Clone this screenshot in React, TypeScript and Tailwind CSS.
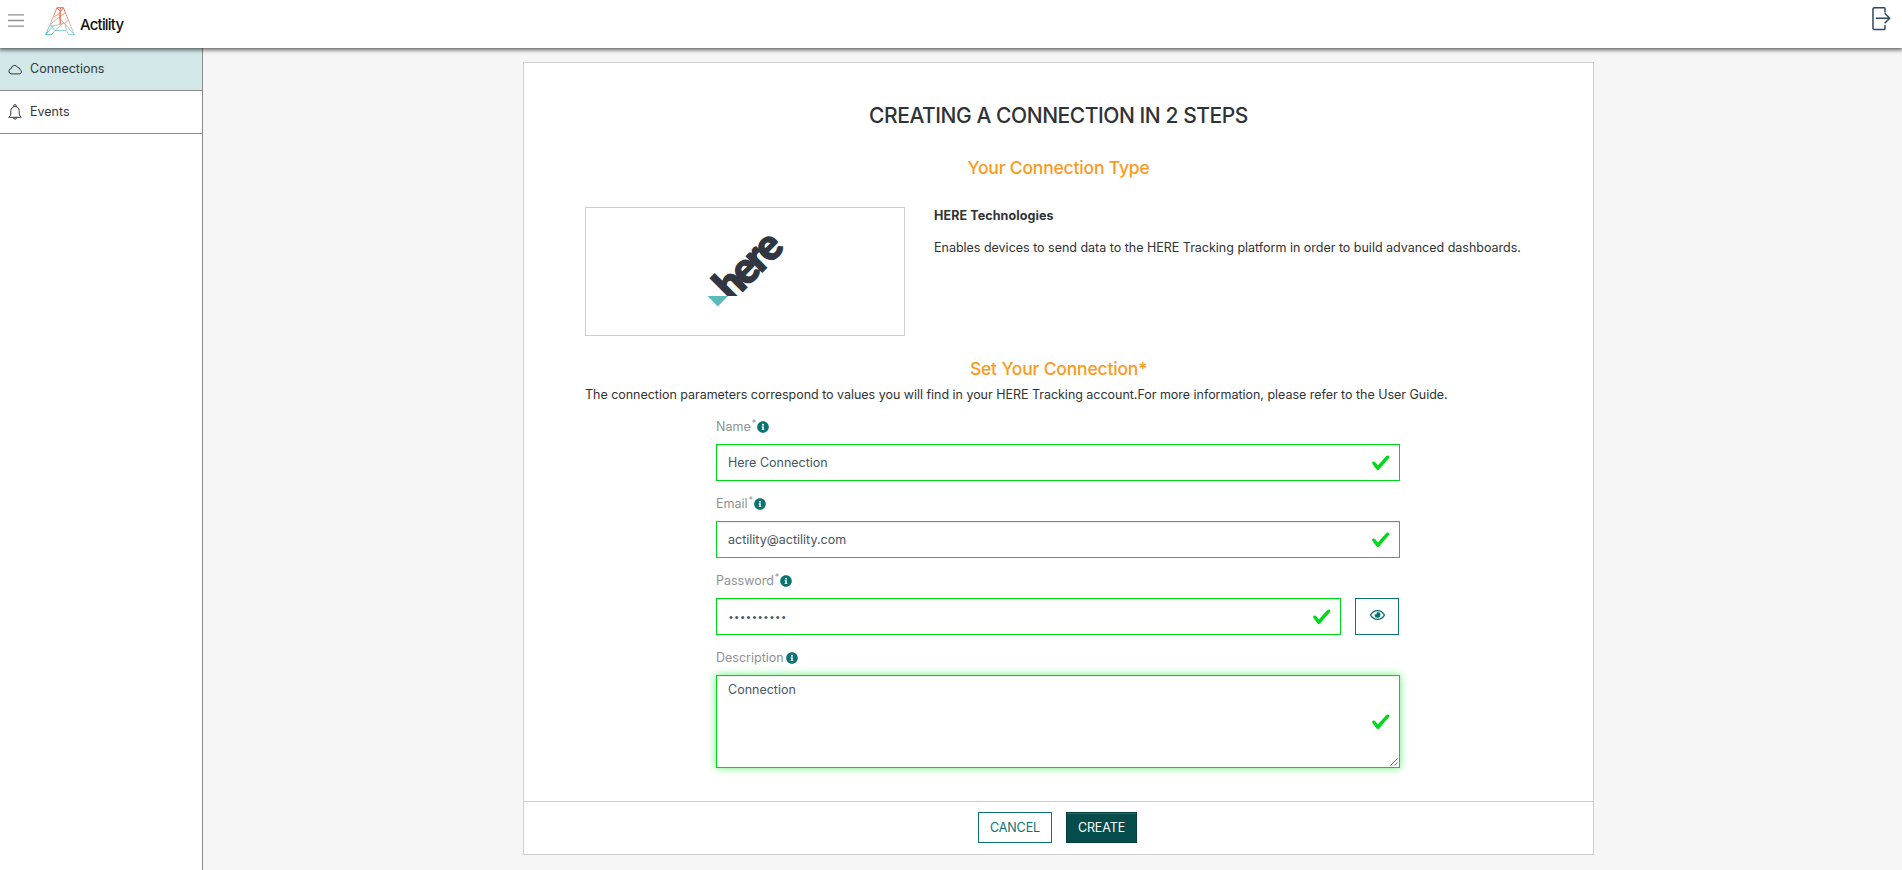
import { type ReactNode } from "react";
import { FaInfoCircle, FaRegEye } from "react-icons/fa";

function HeaderLogo() {
  return (
    <div className="flex items-start">
      <svg className="h-[29px] w-[30px]" viewBox="0 0 30 29" fill="none" strokeWidth="0.9" strokeLinejoin="round">
        <defs>
          <linearGradient id="tower" x1="18" y1="0" x2="10" y2="29" gradientUnits="userSpaceOnUse">
            <stop offset="0" stopColor="#e8543a" />
            <stop offset="0.45" stopColor="#efa58c" />
            <stop offset="0.75" stopColor="#8fcfcb" />
            <stop offset="1" stopColor="#35b3c0" />
          </linearGradient>
        </defs>
        <g stroke="url(#tower)">
          <path d="M12 .7h6.300L29.300 27.700h-5.600l-2.300-4.200H10L6.400 27.700H.7L12 .7Z" />
          <path d="M12 .7 15.500 5M18.300.7 14 7 16 18M8.500 10 14 7M19.800 6 5 17.500 8 19 .7 27.700M8 19l12-3 3.500-3M14.500 11l14.800 16.700M5 17.500 10 23.500 18 16M20 16l1.400 7.500" />
        </g>
        <path d="M15.200 1v16" stroke="#e8704f" strokeWidth="1.1" />
      </svg>
      <span className="ml-[5px] mt-[9px] text-[15px] font-medium leading-[18px] tracking-[-0.8px] text-[#111]">Actility</span>
    </div>
  );
}

function Header() {
  return (
    <header className="relative z-10 flex h-12 shrink-0 items-start bg-white shadow-[0_1px_4px_1px_rgba(0,0,0,0.6)]">
      <svg className="ml-2 mt-[14px] h-[14px] w-4" viewBox="0 0 16 14" stroke="#8f8f8f" strokeWidth="1.3">
        <path d="M0 .9h16M0 6.500h16M0 12.100h16" />
      </svg>
      <div className="ml-[21px] mt-[7px]">
        <HeaderLogo />
      </div>
      <svg className="ml-auto mr-[11px] mt-[7px] h-6 w-[19px]" viewBox="0 0 19 24" fill="none" stroke="#2f4a60" strokeWidth="1.5" strokeLinejoin="round">
        <path d="M13 5.500V1.500q0-.7-.7-.7H2.200Q1 .8 1 2v19.500q0 1 1.200 1h10.100q.7 0 .7-.7V18" />
        <path d="M3.700 11.300H17M12.700 6.300l5 5-5 5" />
      </svg>
    </header>
  );
}

function SideItem({ label, active, icon }: { label: string; active?: boolean; icon: ReactNode }) {
  return (
    <a className={`flex h-[43px] items-center border-b border-[#8a8a8a] pl-2 text-[12.5px] text-[#33373b] ${active ? "bg-[#d3e8e8]" : "bg-white"}`}>
      <span className="flex w-[22px]">{icon}</span>
      <span className="pt-px">{label}</span>
    </a>
  );
}

function Sidebar() {
  return (
    <nav className="w-[203px] shrink-0 border-r border-[#8a8a8a] bg-white">
      <SideItem
        label="Connections"
        active
        icon={
          <svg className="h-[11px] w-[14px]" viewBox="0 0 14 11" fill="none" stroke="#33373b" strokeWidth="1">
            <path d="M3 9.900h8.300a2.200 2.200 0 0 0 .8-4.200Q11.800 3.300 9.700 3.600A3.300 3.300 0 0 0 3.300 4.500 2.750 2.750 0 0 0 3 9.900Z" />
          </svg>
        }
      />
      <SideItem
        label="Events"
        icon={
          <svg className="h-4 w-[14px]" viewBox="0 0 14 16" fill="none" stroke="#33373b" strokeWidth="1" strokeLinejoin="round">
            <path d="M.7 13.300Q2.800 11.800 2.800 10V6.700a4.200 4.200 0 0 1 8.400 0V10q0 1.800 2.100 3.300ZM5.700 2.700V1.500q0-.8 1.300-.8t1.300.8v1.200M5.300 13.500q.3 1.700 1.700 1.700t1.700-1.700" />
          </svg>
        }
      />
    </nav>
  );
}

function HereLogo() {
  return (
    <svg className="h-[76px] w-[80px] overflow-visible" viewBox="705 234 80 76">
      <clipPath id="ground">
        <path d="M700 220h100v76H700Z" />
      </clipPath>
      <g clipPath="url(#ground)">
        <text
          transform="translate(731.5 302.5) rotate(-45) scale(0.97 1)"
          className="font-['Lato'] text-[43px] font-black tracking-[-2.5px]"
          fill="#323640"
          stroke="#323640"
          strokeWidth="1.6"
        >
          here
        </text>
      </g>
      <path d="M707.500 296H728L717.800 306.400Z" fill="#5cb9bc" />
    </svg>
  );
}

function Check() {
  return (
    <svg className="h-[19.5px] w-[19.5px]" viewBox="0 0 8 8" fill="#00d81a">
      <path d="M2.300 6.730L.6 4.530c-.4-1.040.46-1.400 1.100-.8l1.100 1.400 3.400-3.800c.6-.63 1.600-.27 1.200.7l-4 4.600c-.43.5-.8.4-1.100.1z" />
    </svg>
  );
}

function Label({ text, required }: { text: string; required?: boolean }) {
  return (
    <div className="flex h-[37px] items-center pt-2 text-[12.5px] text-[#8f9294]">
      <span className="pt-[2px]">{text}</span>
      {required && <span className="mb-[9px] ml-px text-[9px] leading-[9px]">*</span>}
      <FaInfoCircle className={`h-3 w-3 text-[#0a7271] ${required ? "ml-px" : "ml-[2px]"}`} />
    </div>
  );
}

function Field({ label, required, focused, children, after }: { label: string; required?: boolean; focused?: boolean; children: ReactNode; after?: ReactNode }) {
  return (
    <div>
      <Label text={label} required={required} />
      <div className={`mt-[3px] flex ${focused ? "h-[93px]" : "h-[37px]"}`}>
        <div
          className={`relative flex flex-1 items-center justify-between border border-[#00d81a] bg-white pl-[11px] pr-[9px] text-[12.5px] text-[#495660] ${
            focused ? "shadow-[inset_0_1px_1px_rgba(0,0,0,0.075),0_0_8px_#66f077]" : "shadow-[inset_0_1px_1px_rgba(0,0,0,0.075)]"
          }`}
        >
          {children}
          <Check />
          {focused && (
            <svg className="absolute bottom-[1px] right-[1px] h-2 w-2" viewBox="0 0 8 8" stroke="#444" strokeWidth=".8">
              <path d="M.5 7.500l7-7M4.500 7.500l3-3" />
            </svg>
          )}
        </div>
        {after}
      </div>
    </div>
  );
}

export default function App() {
  return (
    <div className="flex h-[870px] w-full flex-col overflow-hidden bg-[#f6f6f6] font-['Inter',sans-serif]">
      <Header />
      <div className="flex flex-1">
        <Sidebar />
        <main className="flex flex-1 flex-col items-center pl-[12px] pt-[14px]">
          <section className="flex h-[793px] w-[1071px] flex-col border border-[#cfcfcf] bg-white text-[#303336]">
            <div className="flex-1 px-[61px]">
              <h1 className="mt-[38px] text-center text-[21px] font-medium leading-[30px] tracking-[-0.44px]">CREATING A CONNECTION IN 2 STEPS</h1>
              <h2 className="mt-[24px] text-center text-[17.5px] font-medium leading-[26px] tracking-[-0.18px] text-[#fb9a1c]">Your Connection Type</h2>
              <div className="mt-[26px] flex">
                <div className="flex h-[129px] w-[320px] shrink-0 items-start justify-center border border-[#cfcfcf] pt-[26px]">
                  <HereLogo />
                </div>
                <div className="ml-[29px] whitespace-nowrap text-[12.5px] leading-[18px]">
                  <p className="font-bold tracking-[0.1px]">HERE Technologies</p>
                  <p className="mt-[14px] tracking-[-0.01px]">Enables devices to send data to the HERE Tracking platform in order to build advanced dashboards.</p>
                </div>
              </div>
              <h2 className="mt-[20px] text-center text-[17.5px] font-medium leading-[26px] tracking-[-0.18px] text-[#fb9a1c]">Set Your Connection*</h2>
              <p className="mt-[4px] text-[12.5px] leading-[18px] tracking-[-0.025px]">
                The connection parameters correspond to values you will find in your HERE Tracking account.For more information, please refer to the User Guide.
              </p>
              <div className="ml-[131px] w-[684px]">
                <Field label="Name" required>
                  <span className="pt-[2px]">Here Connection</span>
                </Field>
                <Field label="Email" required>
                  <span className="pt-[2px]">actility@actility.com</span>
                </Field>
                <Field
                  label="Password"
                  required
                  after={
                    <button className="ml-[14px] mr-px flex w-[44px] items-center justify-center border border-[#0a7271] pb-[3px] text-[#0a7271]">
                      <FaRegEye className="h-[14px] w-[15px]" />
                    </button>
                  }
                >
                  <span className="pl-px pt-px font-['Liberation_Sans',sans-serif] text-[11px] tracking-[2px]">••••••••••</span>
                </Field>
                <Field label="Description" focused>
                  <span className="self-start pt-[5px]">Connection</span>
                </Field>
              </div>
            </div>
            <footer className="flex h-[53px] items-start justify-center border-t border-[#cfcfcf] pr-[2px] pt-[10px] text-[12.5px] tracking-[-0.1px]">
              <button className="flex h-[31px] w-[74px] items-center justify-center border border-[#0a7271] pt-[2px] text-[#0a7271]">CANCEL</button>
              <button className="ml-[14px] flex h-[31px] w-[71px] items-center justify-center border border-[#043f3e] bg-[#054d4c] pt-[2px] text-white shadow-[inset_0_1px_0_rgba(255,255,255,0.15)]">
                CREATE
              </button>
            </footer>
          </section>
        </main>
      </div>
    </div>
  );
}
